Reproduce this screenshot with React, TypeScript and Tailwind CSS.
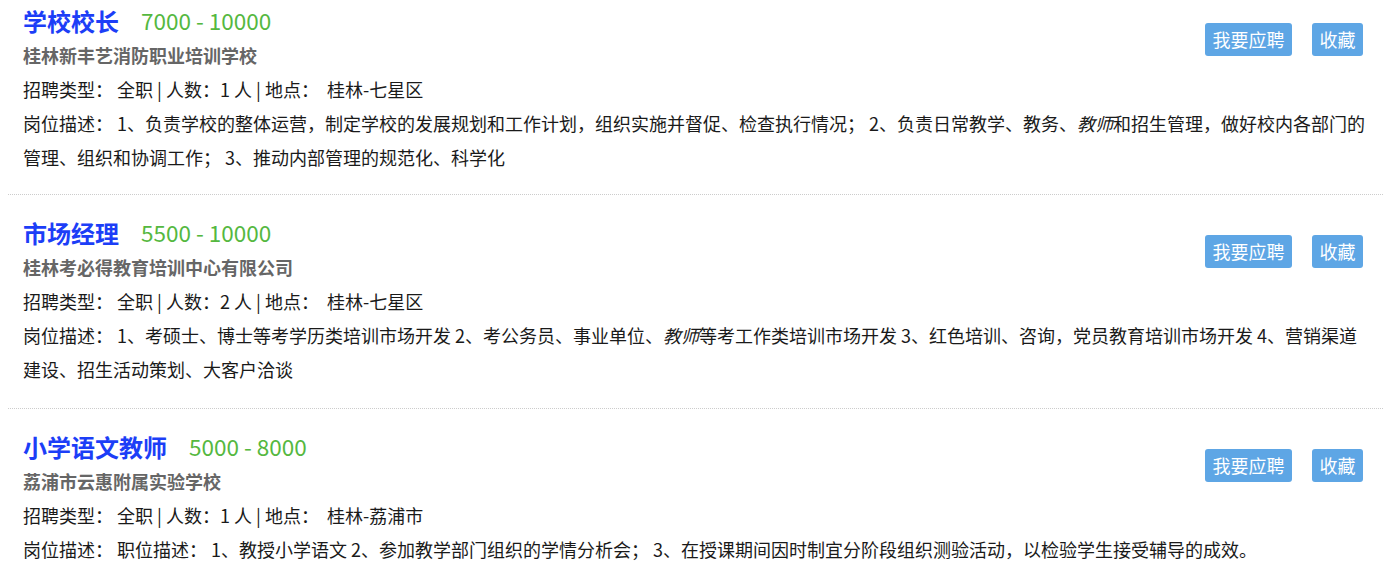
import React from "react";

type Job = {
    title: string;
    salary: string;
    company: string;
    count: number;
    place: string;
    desc: React.ReactNode;
};

const jobs: Job[] = [
    {
        title: "学校校长",
        salary: "7000 - 10000",
        company: "桂林新丰艺消防职业培训学校",
        count: 1,
        place: "桂林-七星区",
        desc: (
            <>
                1、负责学校的整体运营，制定学校的发展规划和工作计划，组织实施并督促、检查执行情况； 2、负责日常教学、教务、
                <em>教师</em>和招生管理，做好校内各部门的管理、组织和协调工作； 3、推动内部管理的规范化、科学化
            </>
        ),
    },
    {
        title: "市场经理",
        salary: "5500 - 10000",
        company: "桂林考必得教育培训中心有限公司",
        count: 2,
        place: "桂林-七星区",
        desc: (
            <>
                1、考硕士、博士等考学历类培训市场开发 2、考公务员、事业单位、<em>教师</em>
                等考工作类培训市场开发 3、红色培训、咨询，党员教育培训市场开发 4、营销渠道建设、招生活动策划、大客户洽谈
            </>
        ),
    },
    {
        title: "小学语文教师",
        salary: "5000 - 8000",
        company: "荔浦市云惠附属实验学校",
        count: 1,
        place: "桂林-荔浦市",
        desc: (
            <>
                职位描述： 1、教授小学语文 2、参加教学部门组织的学情分析会； 3、在授课期间因时制宜分阶段组织测验活动，以检验学生接受辅导的成效。
            </>
        ),
    },
];

function JobItem({ job }: { job: Job }) {
    return (
        <div className="border-b border-dotted border-[#cccccc] px-[15px] pt-[20px] pb-[22px] first:pt-[3px] first:pb-[20px]">
            <div className="flex items-center justify-between">
                <div>
                    <div className="flex h-[35px] items-center">
                        <span className="text-[24px] font-bold text-[#1c3ef7]">
                            {job.title}
                        </span>
                        <span className="ml-[22px] text-[22.5px] text-[#55b83f]">
                            {job.salary}
                        </span>
                    </div>
                    <div className="text-[18px] leading-[34px] font-bold text-[#666666]">
                        {job.company}
                    </div>
                </div>
                <div className="mr-[5px] mt-[3px] flex gap-[20px]">
                    <button className="h-[33px] rounded-[3px] bg-[#5ea6e5] px-[7.5px] text-[18px] text-white">
                        我要应聘
                    </button>
                    <button className="h-[33px] rounded-[3px] bg-[#5ea6e5] px-[7.5px] text-[18px] text-white">
                        收藏
                    </button>
                </div>
            </div>
            <div className="text-[18px] leading-[34px] text-[#1a1a1a]">
                招聘类型：&nbsp;全职 | 人数：{job.count} 人 | 地点：&nbsp;&nbsp;{job.place}
            </div>
            <div className="text-[18px] leading-[34px] text-[#1a1a1a]">
                岗位描述：&nbsp;{job.desc}
            </div>
        </div>
    );
}

export default function App() {
    return (
        <div
            className="h-[583px] overflow-hidden bg-white px-[8px]"
            style={{ fontFamily: '"Noto Sans CJK SC", "Noto Sans", sans-serif' }}
        >
            {jobs.map((job) => (
                <JobItem key={job.title} job={job} />
            ))}
        </div>
    );
}
